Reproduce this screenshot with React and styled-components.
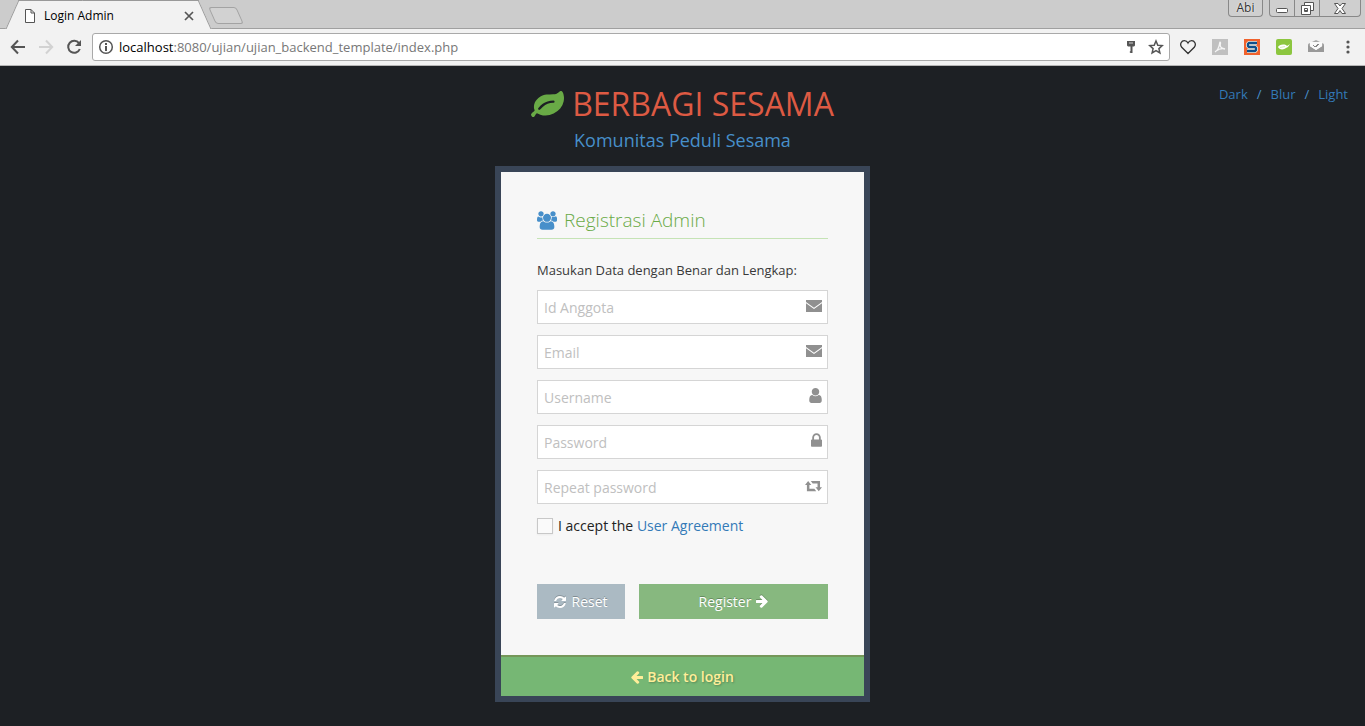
import styled, { createGlobalStyle } from 'styled-components';

const GlobalStyle = createGlobalStyle`
    * {
        box-sizing: border-box;
    }
    body {
        margin: 0;
        background: #1d2024;
        color: #393939;
        font-family: "Open Sans", "Noto Sans", sans-serif;
        font-size: 13px;
        line-height: 20px;
    }
    a {
        color: #337ab7;
        text-decoration: none;
    }
    svg {
        display: block;
        flex: none;
    }
`;

/* browser window */

const TabStrip = styled.div`
    display: flex;
    height: 29px;
    padding-left: 12px;
    background: #ccc;
    border-bottom: 1px solid #a0a0a0;
`;

const Tab = styled.div`
    position: relative;
    display: flex;
    align-items: center;
    width: 193px;
    height: 29px;
    padding: 2px 9px 0 12px;
    color: #000;
    font-size: 12px;

    &::before, &::after {
        content: '';
        position: absolute;
        top: 0;
        bottom: 0;
        background: #f2f2f2;
        border-top: 1px solid #999;
    }
    &::before {
        left: 0;
        right: 50%;
        border-left: 1px solid #999;
        transform: skewX(-24deg);
    }
    &::after {
        left: 40%;
        right: 0;
        border-right: 1px solid #999;
        transform: skewX(24deg);
    }
    & > * {
        position: relative;
        z-index: 1;
    }
`;

const TabTitle = styled.span`
    flex: 1;
    margin-left: 8px;
`;

const IconButton = styled.button`
    display: flex;
    padding: 0;
    border: 0;
    background: none;
    color: ${({ $color }) => $color || '#555'};
`;

const NewTab = styled.button`
    width: 28px;
    height: 17px;
    margin: 7px 0 0 7px;
    padding: 0;
    background: #d2d2d2;
    border: 1px solid #a3a3a3;
    border-radius: 3px;
    transform: skewX(24deg);
`;

const WindowControls = styled.div`
    display: flex;
    gap: 6px;
    height: 17px;
    margin: 0 4px 0 auto;
`;

const ControlGroup = styled.div`
    display: flex;
    border: 1px solid #888;
    border-top: 0;
    border-radius: 0 0 4px 4px;
    background: #cfcfcf;
    overflow: hidden;
`;

const WindowButton = styled.button`
    display: flex;
    align-items: center;
    justify-content: center;
    width: ${({ $width }) => $width}px;
    height: 16px;
    padding: 0;
    border: 0;
    background: none;
    color: #333;
    font-family: inherit;
    font-size: 12px;
    line-height: 16px;
    text-shadow: 0 0 2px #fff;

    & + & {
        border-left: 1px solid #888;
    }
`;

const Toolbar = styled.div`
    display: flex;
    align-items: center;
    height: 37px;
    padding: 0 9px 0 10px;
    background: #f2f2f2;
    border-bottom: 1px solid #b5b5b5;
`;

const NavButtons = styled.div`
    display: flex;
    gap: 12px;
    margin-right: 10px;
`;

const AddressBar = styled.div`
    display: flex;
    flex: 1;
    align-items: center;
    gap: 9px;
    height: 28px;
    padding: 0 5px;
    background: #fff;
    border: 1px solid #a9a9a9;
    border-radius: 3px;
`;

const Address = styled.div`
    flex: 1;
    margin-left: -4px;
    color: #777;
    font-size: 13px;

    b {
        color: #000;
        font-weight: 400;
    }
`;

const Extensions = styled.div`
    display: flex;
    align-items: center;
    gap: 16px;
    margin-left: 10px;
`;

/* page */

const Page = styled.main`
    padding-bottom: 24px;
`;

const Header = styled.header`
    display: grid;
    grid-template-columns: 1fr auto 1fr;
    height: 100px;
`;

const Brand = styled.div`
    grid-column: 2;
    padding-top: 16px;
    text-align: center;
`;

const BrandName = styled.h1`
    display: flex;
    align-items: center;
    gap: 8px;
    margin: 0;
    color: #dd5a43;
    font-size: 32px;
    font-weight: 400;
    line-height: 44px;
`;

const Slogan = styled.h4`
    margin: 0;
    color: #478fca;
    font-size: 18px;
    font-weight: 400;
    line-height: 28px;
`;

const Themes = styled.nav`
    justify-self: end;
    display: flex;
    gap: 9px;
    padding: 18px 17px 0 0;
    color: #4a90c8;

    a {
        color: #337ab7;
    }
`;

const Card = styled.section`
    width: 375px;
    margin: 0 auto;
    background: #f7f7f7;
    border: 6px solid #394557;
`;

const CardMain = styled.form`
    padding: 36px;
`;

const CardTitle = styled.h4`
    display: flex;
    align-items: center;
    gap: 7px;
    height: 31px;
    margin: 0 0 21px;
    padding-bottom: 6px;
    color: #69aa46;
    border-bottom: 1px solid #c5e3b5;
    font-size: 19px;
    font-weight: 300;
`;

const Intro = styled.p`
    margin: 0 0 10px;
`;

const Fields = styled.div`
    display: grid;
    gap: 11px;
`;

const Field = styled.label`
    position: relative;
    display: block;
    height: 34px;
    color: #909090;

    svg {
        position: absolute;
        top: 8px;
        right: 6px;
    }
`;

const TextInput = styled.input`
    width: 100%;
    height: 34px;
    padding: 0 28px 0 6px;
    color: #858585;
    background: #fff;
    border: 1px solid #d5d5d5;
    border-radius: 0;
    font-family: inherit;
    font-size: 14px;

    &::placeholder {
        color: #c0c0c0;
    }
`;

const Accept = styled.label`
    display: flex;
    align-items: center;
    gap: 5px;
    margin: 12px 0 48px;
    font-size: 14px;

    span {
        color: #222;
    }
`;

const Checkbox = styled.input`
    appearance: none;
    width: 16px;
    height: 16px;
    margin: 0;
    background: #fafafa;
    border: 1px solid #c8c8c8;
    box-shadow: 0 1px 2px rgba(0,0,0,.05);
`;

const Actions = styled.div`
    display: flex;
    gap: 14px;
`;

const Button = styled.button`
    display: flex;
    align-items: center;
    justify-content: center;
    gap: 5px;
    height: 35px;
    padding: 0;
    border: 0;
    color: #fff;
    background: ${({ $primary }) => $primary ? '#87b87f' : '#abbac3'};
    font-family: inherit;
    font-size: 14px;
    text-shadow: 0 -1px 0 rgba(0,0,0,.25);
    ${({ $primary }) => $primary ? 'flex: 1;' : 'width: 88px;'}

    svg {
        filter: drop-shadow(0 -1px 0 rgba(0,0,0,.2));
    }
`;

const CardFooter = styled.footer`
    display: flex;
    justify-content: center;
    height: 41px;
    padding-top: 10px;
    background: #76b774;
    border-top: 2px solid #759759;
`;

const BackLink = styled.a`
    display: flex;
    align-items: center;
    gap: 4px;
    height: 20px;
    color: #fe9;
    font-size: 14px;
    font-weight: 600;
    text-shadow: 1px 1px 2px rgba(0,0,0,.25);
`;

const shapes = {
    leaf: 'M1280 832q0-26-19-45t-45-19q-172 0-318 49.5t-259.5 134-235.5 219.5q-19 21-19 45 0 26 19 45t45 19q24 0 45-19 27-24 74-71t67-66q137-124 268.5-176t313.5-52q26 0 45-19t19-45zm512-198q0 95-20 193-46 224-184.5 383t-357.5 268q-214 108-438 108-148 0-286-47-15-5-88-42t-96-37q-16 0-39.5 32t-45 70-52.5 70-60 32q-43 0-63.5-17.5t-45.5-59.5q-2-4-6-11t-5.5-10-3-9.5-1.5-13.5q0-35 31-73.5t68-65.5 68-56 31-48q0-4-14-38t-16-44q-9-51-9-104 0-115 43.5-220t119-184.5 170.5-139 204-95.5q55-18 145-25.5t179.5-9 178.5-6 163.5-24 113.5-56.5l29.5-29.5 29.5-28 27-20 36.5-16 43.5-4.5q39 0 70.5 46t47.5 112 24 124 8 96z',
    users: 'M657 896q-162 5-265 128h-134q-82 0-138-40.5t-56-118.5q0-353 124-353 6 0 43.5 21t97.5 42.5 119 21.5q67 0 133-23-5 37-5 66 0 159 93 287zm1071 637q0 120-73 189.5t-194 69.5h-874q-121 0-194-69.5t-73-189.5q0-53 3.5-103.5t14-109 26.5-108.5 43-97.5 62-81 85.5-53.5 111.5-20q10 0 43 21.5t73 48 107 48 135 21.5 135-21.5 107-48 73-48 43-21.5q61 0 111.5 20t85.5 53.5 62 81 43 97.5 26.5 108.5 14 109 3.5 103.5zm-1024-1277q0 106-75 181t-181 75-181-75-75-181 75-181 181-75 181 75 75 181zm704 384q0 159-112.5 271.5t-271.5 112.5-271.5-112.5-112.5-271.5 112.5-271.5 271.5-112.5 271.5 112.5 112.5 271.5zm576 225q0 78-56 118.5t-138 40.5h-134q-103-123-265-128 93-128 93-287 0-29-5-66 66 23 133 23 59 0 119-21.5t97.5-42.5 43.5-21q124 0 124 353zm-128-609q0 106-75 181t-181 75-181-75-75-181 75-181 181-75 181 75 75 181z',
    envelope: 'M0 224H1792V440L896 1080L0 440ZM0 590L896 1230L1792 590V1568H0Z',
    user: 'M1536 1399q0 109-62.5 187t-150.5 78h-854q-88 0-150.5-78t-62.5-187q0-85 8.5-160.5t31.5-152 58.5-131 94-89 134.5-34.5q131 128 313 128t313-128q76 0 134.5 34.5t94 89 58.5 131 31.5 152 8.5 160.5zm-256-887q0 159-112.5 271.5t-271.5 112.5-271.5-112.5-112.5-271.5 112.5-271.5 271.5-112.5 271.5 112.5 112.5 271.5z',
    lock: 'M640 768h512v-192q0-106-75-181t-181-75-181 75-75 181v192zm832 96v576q0 40-28 68t-68 28h-960q-40 0-68-28t-28-68v-576q0-40 28-68t68-28h32v-192q0-184 132-316t316-132 316 132 132 316v192h32q40 0 68 28t28 68z',
    retweet: 'M380 300L760 780H530V1230H1130L1350 1540H230V780H0ZM700 300H1810V1060H2048L1660 1540L1270 1060H1510V600H920Z',
    refresh: 'M1639 1056q0 5-1 7-64 268-268 434.5t-478 166.5q-146 0-282.5-55t-243.5-157l-129 129q-19 19-45 19t-45-19-19-45v-448q0-26 19-45t45-19h448q26 0 45 19t19 45-19 45l-137 137q71 66 161 102t187 36q134 0 250-65t186-179q11-17 53-117 8-23 30-23h192q13 0 22.5 9.5t9.5 22.5zm25-800v448q0 26-19 45t-45 19h-448q-26 0-45-19t-19-45 19-45l138-138q-148-137-349-137-134 0-250 65t-186 179q-11 17-53 117-8 23-30 23h-199q-13 0-22.5-9.5t-9.5-22.5v-7q65-268 270-434.5t480-166.5q146 0 284 55.5t245 156.5l130-129q19-19 45-19t45 19 19 45z',
    arrow: 'M1600 960q0 54-37 91l-651 651q-39 37-91 37-51 0-90-37l-75-75q-38-38-38-91t38-91l293-293h-704q-52 0-84.5-37.5t-32.5-90.5v-128q0-53 32.5-90.5t84.5-37.5h704l-293-294q-38-36-38-90t38-90l75-75q38-38 90-38 53 0 91 38l651 651q37 35 37 90z'
};

function Icon({ name, box = '0 0 1792 1792', width = 16, height = 16, color = 'currentColor', flip }) {
    return <svg width={width} height={height} viewBox={box} fill={color} aria-hidden="true">
        <path d={shapes[name]} transform={flip ? 'translate(1792 0) scale(-1 1)' : undefined} />
    </svg>
}

const fields = [
    { label: 'Id Anggota', type: 'text', icon: <Icon name="envelope" /> },
    { label: 'Email', type: 'email', icon: <Icon name="envelope" /> },
    { label: 'Username', type: 'text', icon: <Icon name="user" box="256 128 1280 1536" width={13} height={15} /> },
    { label: 'Password', type: 'password', icon: <Icon name="lock" box="320 128 1152 1408" width={11} height={14} /> },
    { label: 'Repeat password', type: 'password', icon: <Icon name="retweet" box="0 0 2048 1792" width={17} height={16} /> }
];

function BrowserBar() {
    return <>
        <TabStrip>
            <Tab>
                <svg width="12" height="14" viewBox="0 0 12 14" fill="#fff" stroke="#555">
                    <path d="M1.5.5H7l3.5 3.5v9.5h-9zM7 .5V4h3.5" />
                </svg>
                <TabTitle>Login Admin</TabTitle>
                <IconButton aria-label="Close tab">
                    <svg width="14" height="10" viewBox="0 0 14 10" stroke="#555" strokeWidth="1.7">
                        <path d="M3 1l8 8M11 1L3 9" />
                    </svg>
                </IconButton>
            </Tab>
            <NewTab aria-label="New tab" />
            <WindowControls>
                <ControlGroup>
                    <WindowButton $width={33}>Abi</WindowButton>
                </ControlGroup>
                <ControlGroup>
                    <WindowButton $width={24} aria-label="Minimize">
                        <svg width="13" height="14" viewBox="0 0 13 14" fill="#fff" stroke="#555">
                            <rect x=".5" y="7.5" width="11" height="4" rx="1" />
                        </svg>
                    </WindowButton>
                    <WindowButton $width={25} aria-label="Restore">
                        <svg width="13" height="13" viewBox="0 0 13 13" fill="#fff" stroke="#555">
                            <path d="M3.5.5h9v8h-9z" />
                            <path d="M.5 3.5h9v9h-9zM3.500 6.500h3v3h-3z" fillRule="evenodd" />
                        </svg>
                    </WindowButton>
                    <WindowButton $width={41} aria-label="Close">
                        <svg width="12" height="11" viewBox="0 0 12 11" fill="#fff" stroke="#555">
                            <path d="M.5.5h3.500L6 3l2-2.500h3.500L8 5.500l3.500 5H8l-2-3-2 3H.5l3.500-5z" />
                        </svg>
                    </WindowButton>
                </ControlGroup>
            </WindowControls>
        </TabStrip>
        <Toolbar>
            <NavButtons>
                <IconButton aria-label="Back">
                    <svg width="16" height="16" viewBox="0 0 16 16" fill="none" stroke="currentColor" strokeWidth="2">
                        <path d="M15 8H2M8 1.500L1.800 8 8 14.500" />
                    </svg>
                </IconButton>
                <IconButton aria-label="Forward" $color="#d2d2d2">
                    <svg width="16" height="16" viewBox="0 0 16 16" fill="none" stroke="currentColor" strokeWidth="2">
                        <path d="M1 8h13M8 1.500L14.200 8 8 14.500" />
                    </svg>
                </IconButton>
                <IconButton aria-label="Reload">
                    <svg width="16" height="16" viewBox="0 0 16 16" fill="none" stroke="currentColor" strokeWidth="2">
                        <path d="M13 4.200A6 6 0 1 0 13.800 10" />
                        <path d="M15 1v6H9z" fill="currentColor" stroke="none" />
                    </svg>
                </IconButton>
            </NavButtons>
            <AddressBar>
                <svg width="16" height="16" viewBox="0 0 16 16" fill="none" stroke="#555" strokeWidth="1.500">
                    <circle cx="8" cy="8" r="6.300" />
                    <path d="M8 7v5M8 4v2" strokeWidth="2" />
                </svg>
                <Address><b>localhost</b>:8080/ujian/ujian_backend_template/index.php</Address>
                <svg width="16" height="16" viewBox="0 0 16 16" fill="#555">
                    <path d="M4 2h8v4.500l-1 1H9.500V14H7.500l-1-1 1-1V7.500H5l-1-1z" />
                    <path d="M6 3.500h4v1H6z" fill="#ccc" />
                </svg>
                <svg width="16" height="16" viewBox="0 0 16 16" fill="none" stroke="#555" strokeWidth="1.500">
                    <path d="M8 2l1.800 4.200 4.500.4-3.400 3 1 4.400L8 11.700 4.100 14l1-4.400-3.400-3 4.500-.4z" />
                </svg>
            </AddressBar>
            <Extensions>
                <svg width="16" height="16" viewBox="0 0 16 16" fill="none" stroke="#333" strokeWidth="1.300">
                    <path d="M8 14.500L1.500 8C-.5 5 1.500 1.700 4.300 1.700 6 1.700 7.300 2.600 8 4c.7-1.400 2-2.300 3.700-2.300C14.500 1.700 16.500 5 14.500 8z" />
                </svg>
                <svg width="16" height="16" viewBox="0 0 16 16" fill="none">
                    <path d="M0 0h16v16H0z" fill="#c0c0c0" />
                    <path d="M3 13c3-2 4-5 4.500-8 .3-3 1.500-2 .8.500-.6 2.500 1.500 4 4.700 4.500-3-.8-6 0-9 2" stroke="#f5f5f5" strokeWidth="1.300" />
                </svg>
                <svg width="16" height="16" viewBox="0 0 16 16" fill="none">
                    <path d="M0 0h16v16H0z" fill="#f0622d" />
                    <path d="M13 4H5L4 5v2l1 1h6l1 1v2l-1 1H3" stroke="#f4ead8" strokeWidth="4" />
                    <path d="M13 4H5L4 5v2l1 1h6l1 1v2l-1 1H3" stroke="#0d4f8b" strokeWidth="2.400" />
                </svg>
                <svg width="16" height="16" viewBox="0 0 16 16">
                    <rect width="16" height="16" rx="2" fill="#8cc63f" />
                    <path d="M2 8c1-2 4-3 8-2l1 1 3-2-2 3-2 1c-2 2-7 2-8-1z" fill="#fff" />
                    <path d="M4 8.500l5-1" stroke="#d9edbc" />
                </svg>
                <svg width="16" height="16" viewBox="0 0 16 16">
                    <path d="M0 5l8-4 8 4v8H0z" fill="#aaa" />
                    <path d="M2 3h12v6l-6 3-6-3z" fill="#fff" />
                    <path d="M0 6l8 5 8-5v7H0z" fill="#999" />
                    <path d="M2 3h12v4l-6 4-6-4z" fill="#fafafa" />
                    <path d="M5 6l2 2 3-3M8 8l3-3" fill="none" stroke="#888" />
                </svg>
                <IconButton aria-label="Menu">
                    <svg width="16" height="16" viewBox="0 0 16 16" fill="currentColor">
                        <circle cx="8" cy="3" r="1.600" />
                        <circle cx="8" cy="8" r="1.600" />
                        <circle cx="8" cy="13" r="1.600" />
                    </svg>
                </IconButton>
            </Extensions>
        </Toolbar>
    </>
}

function App() {
    return <>
        <GlobalStyle />
        <BrowserBar />
        <Page>
            <Header>
                <Brand>
                    <BrandName>
                        <Icon name="leaf" box="0 256 1792 1408" width={33} height={26} color="#69aa46" />
                        BERBAGI SESAMA
                    </BrandName>
                    <Slogan>Komunitas Peduli Sesama</Slogan>
                </Brand>
                <Themes>
                    <a href="#dark">Dark</a>
                    <span>/</span>
                    <a href="#blur">Blur</a>
                    <span>/</span>
                    <a href="#light">Light</a>
                </Themes>
            </Header>
            <Card>
                <CardMain>
                    <CardTitle>
                        <Icon name="users" box="64 0 1920 1792" width={20} height={19} color="#478fca" />
                        Registrasi Admin
                    </CardTitle>
                    <Intro>Masukan Data dengan Benar dan Lengkap:</Intro>
                    <Fields>
                        {fields.map(field => (
                            <Field key={field.label}>
                                <TextInput type={field.type} placeholder={field.label} aria-label={field.label} />
                                {field.icon}
                            </Field>
                        ))}
                    </Fields>
                    <Accept>
                        <Checkbox type="checkbox" />
                        <span>I accept the <a href="#agreement">User Agreement</a></span>
                    </Accept>
                    <Actions>
                        <Button type="reset">
                            <Icon name="refresh" box="128 128 1536 1536" width={12} height={12} />
                            Reset
                        </Button>
                        <Button type="button" $primary>
                            Register
                            <Icon name="arrow" box="160 160 1472 1600" width={12} height={13} />
                        </Button>
                    </Actions>
                </CardMain>
                <CardFooter>
                    <BackLink href="#login">
                        <Icon name="arrow" box="160 160 1472 1600" width={12} height={13} flip />
                        Back to login
                    </BackLink>
                </CardFooter>
            </Card>
        </Page>
    </>
}

export default App;
